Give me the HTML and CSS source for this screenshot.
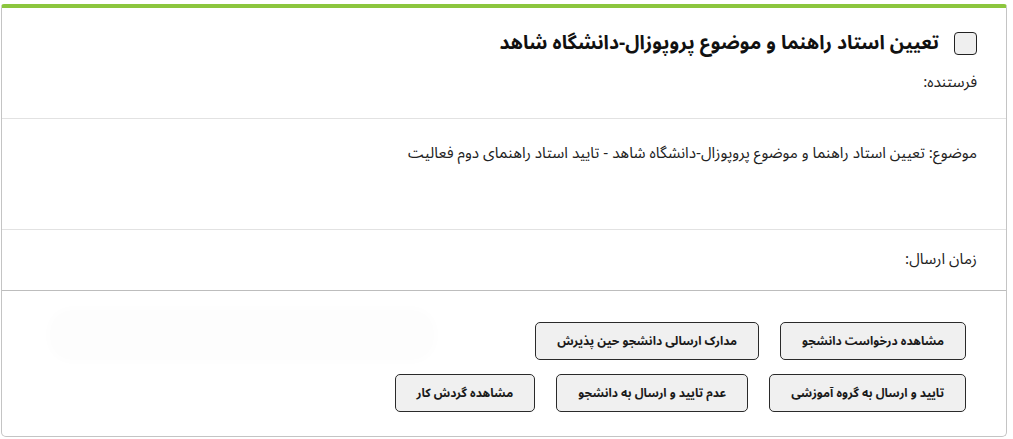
FILE: index.html
```html
<!DOCTYPE html>
<html lang="fa" dir="rtl">
<head>
<meta charset="utf-8">
<title>تعیین استاد راهنما</title>
<link rel="stylesheet" href="styles.css">
</head>
<body>
<div class="card">
  <section class="head">
    <div class="title-row">
      <span class="check"></span>
      <h1 class="title">تعیین استاد راهنما و موضوع پروپوزال-دانشگاه شاهد</h1>
    </div>
    <div class="line sender">فرستنده:</div>
  </section>
  <section class="subject">
    <div class="line">موضوع: تعیین استاد راهنما و موضوع پروپوزال-دانشگاه شاهد - تایید استاد راهنمای دوم فعالیت</div>
  </section>
  <section class="time">
    <div class="line">زمان ارسال:</div>
  </section>
  <section class="actions">
    <div class="btn-row">
      <button class="btn">مشاهده درخواست دانشجو</button>
      <button class="btn">مدارک ارسالی دانشجو حین پذیرش</button>
      <div class="ghost"></div>
    </div>
    <div class="btn-row">
      <button class="btn">تایید و ارسال به گروه آموزشی</button>
      <button class="btn">عدم تایید و ارسال به دانشجو</button>
      <button class="btn">مشاهده گردش کار</button>
    </div>
  </section>
</div>
</body>
</html>
```
FILE: styles.css
```css
html, body {
  margin: 0;
  padding: 0;
  background: #ffffff;
}
body {
  font-family: "Noto Sans Arabic", "DejaVu Sans", sans-serif;
  color: #222;
  padding: 4px 6px 0 1px;
}
.card {
  height: 433px;
  box-sizing: border-box;
  border: 1px solid #c4c4c4;
  border-top: 4px solid #8cc63e;
  border-radius: 3px 3px 5px 5px;
  background: #fff;
  display: flex;
  flex-direction: column;
}
.head {
  height: 111px;
  box-sizing: border-box;
  padding: 22px 29px 0 29px;
  border-bottom: 1px solid #e2e2e2;
}
.title-row {
  display: flex;
  align-items: center;
  gap: 15px;
  height: 26px;
}
.check {
  width: 21px;
  height: 21px;
  border: 1.5px solid #222;
  border-radius: 4px;
  background: #efefef;
  flex: none;
}
.title {
  margin: 0;
  font-size: 19.4px;
  font-weight: bold;
  color: #111;
  line-height: 26px;
}
.line {
  font-size: 15.3px;
  line-height: 20px;
  color: #222;
}
.sender {
  margin-top: 16px;
}
.subject {
  height: 111px;
  box-sizing: border-box;
  padding: 24px 29px 0;
  border-bottom: 1px solid #e2e2e2;
}
.time {
  height: 61px;
  box-sizing: border-box;
  padding: 19px 29px 0;
  border-bottom: 1px solid #bdbdbd;
}
.actions {
  flex: 1;
  padding: 31px 40px 0 40px;
  display: flex;
  flex-direction: column;
  gap: 14px;
}
.btn-row {
  display: flex;
  gap: 21px;
  align-items: flex-start;
}
.btn {
  height: 38px;
  padding: 0 21px;
  border: 1px solid #2a2a2a;
  border-radius: 5px;
  background: #f0f0f0;
  font-family: inherit;
  font-size: 12px;
  font-weight: bold;
  color: #1a1a1a;
}
.ghost {
  margin-right: auto;
  margin-left: 10px;
  margin-top: -10px;
  width: 380px;
  height: 46px;
  border-radius: 20px;
  background: #fdfdfd;
  box-shadow: 0 0 10px 4px #fdfdfd;
}
```
